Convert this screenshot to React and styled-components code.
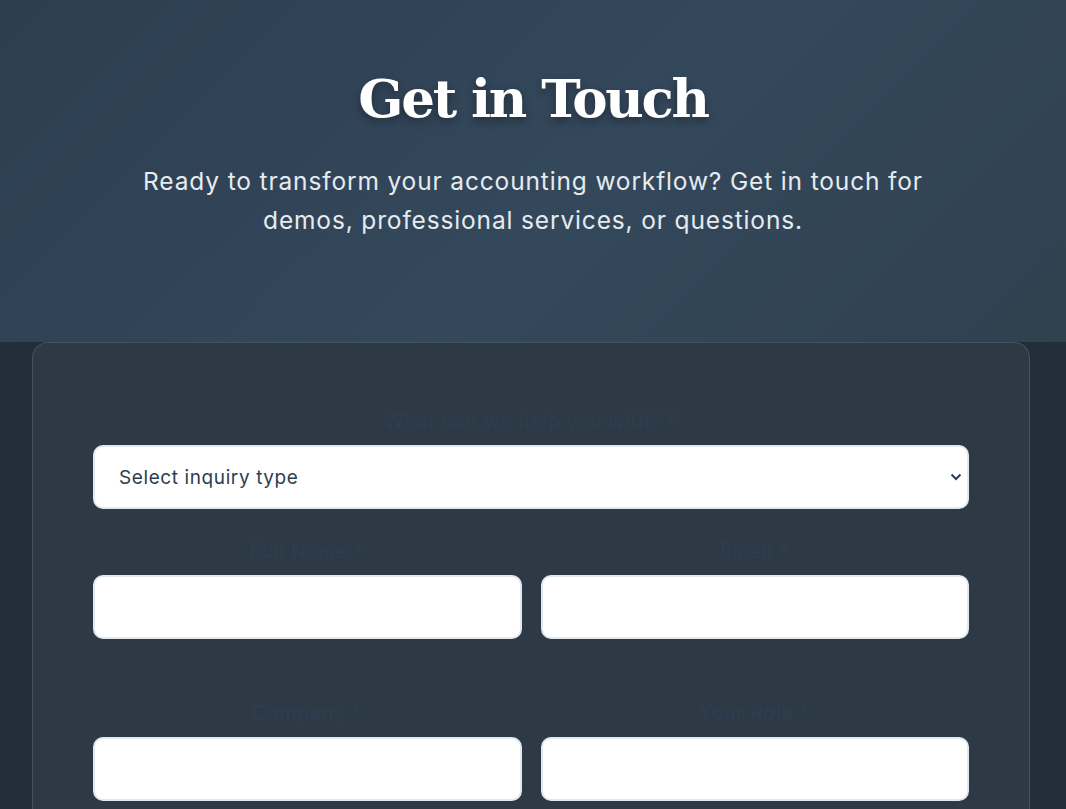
import React from 'react'
import styled, {createGlobalStyle} from 'styled-components'

const Global = createGlobalStyle`
  html, body {
    margin: 0;
    padding: 0;
    background: #222e3a;
  }
  * {
    box-sizing: border-box;
  }
`

const Page = styled.div`
  min-height: 809px;
  background: #222e3a;
  font-family: 'Inter', 'Noto Sans', sans-serif;
`

const Hero = styled.section`
  height: 342px;
  padding-top: 62px;
  text-align: center;
  background: linear-gradient(135deg, #2d3e50 0%, #34485c 55%, #30414f 100%);
`

const Title = styled.h1`
  margin: 0;
  font-family: 'DejaVu Serif', 'Liberation Serif', serif;
  font-weight: bold;
  font-size: 53px;
  line-height: 72px;
  letter-spacing: -2.3px;
  color: #ffffff;
  text-shadow: 0 4px 8px rgba(0, 0, 0, 0.35);
`

const Lead = styled.p`
  max-width: 800px;
  margin: 28px auto 0;
  font-size: 24.5px;
  line-height: 39px;
  letter-spacing: 0.85px;
  color: #e6ebf0;
`

const Card = styled.div`
  margin: 0 36px 0 32px;
  padding: 64px 60px 40px;
  background: #2d3a46;
  border: 1px solid #435160;
  border-bottom: none;
  border-radius: 16px 16px 0 0;
`

const Group = styled.div`
  display: flex;
  flex-direction: column;
  margin-bottom: ${props => props.last ? '0' : '28px'};
`

const Row = styled.div`
  display: grid;
  grid-template-columns: 1fr 1fr;
  gap: 19px;
  margin-bottom: 60px;
`

const Label = styled.label`
  text-align: center;
  font-size: 19.5px;
  line-height: 28px;
  letter-spacing: 0.7px;
  color: #2c3e51;
  margin-bottom: 10px;
`

const fieldCss = `
  width: 100%;
  height: 64px;
  border: 2px solid #e2e8f0;
  border-radius: 10px;
  background: #ffffff;
  font-family: 'Inter', 'Noto Sans', sans-serif;
  font-size: 19px;
  letter-spacing: 0.6px;
  color: #2c3e50;
  outline: none;
`

const Input = styled.input`
  ${fieldCss}
  padding: 0 24px;
`

const SelectWrap = styled.div`
  position: relative;
`

const Select = styled.select`
  ${fieldCss}
  appearance: none;
  padding: 0 24px;
`

const Chevron = styled.svg`
  position: absolute;
  right: 7px;
  top: 28px;
  pointer-events: none;
`

export default function App() {
  return (
    <Page>
      <Global />
      <Hero>
        <Title>Get in Touch</Title>
        <Lead>
          Ready to transform your accounting workflow? Get in touch for demos, professional services, or questions.
        </Lead>
      </Hero>
      <Card>
        <Group>
          <Label>What can we help you with? *</Label>
          <SelectWrap>
            <Select defaultValue="">
              <option value="">Select inquiry type</option>
            </Select>
            <Chevron width="12" height="8" viewBox="0 0 12 8">
              <path d="M1.5 1.5 L6 6 L10.5 1.5" fill="none" stroke="#2c3e50" strokeWidth="2" />
            </Chevron>
          </SelectWrap>
        </Group>
        <Row>
          <Group last>
            <Label>Full Name *</Label>
            <Input />
          </Group>
          <Group last>
            <Label>Email *</Label>
            <Input />
          </Group>
        </Row>
        <Row>
          <Group last>
            <Label>Company *</Label>
            <Input />
          </Group>
          <Group last>
            <Label>Your Role *</Label>
            <Input />
          </Group>
        </Row>
      </Card>
    </Page>
  )
}
